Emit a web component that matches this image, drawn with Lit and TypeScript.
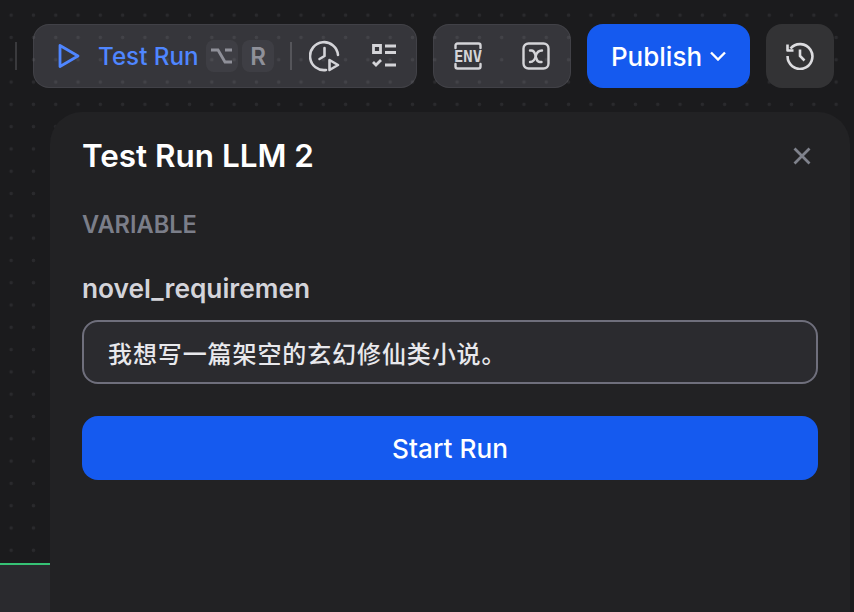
import { LitElement, html, css } from "lit";
import { customElement } from "lit/decorators.js";

@customElement("app-root")
export class AppRoot extends LitElement {
  static styles = css`
    :host { display: block; }
    * { box-sizing: border-box; }
    .canvas {
      position: relative; width: 854px; height: 612px; overflow: hidden;
      display: flex; flex-direction: column;
      background-color: #1b1b1d;
      background-image: radial-gradient(circle at center, #2a2a2d 0, #2a2a2d 1.5px, transparent 2.1px);
      background-size: 22.3px 22.3px;
      background-position: 0 4px;
      font-family: Inter, "Noto Sans CJK SC", sans-serif;
    }
    .node {
      position: absolute; left: 0; top: 563px; width: 60px; height: 49px;
      background: #2a2a2e; border-top: 2px solid #36c275;
    }
    .toolbar { display: flex; align-items: center; height: 64px; margin-top: 24px; padding-left: 15px; position: relative; }
    .sep { width: 2px; height: 28px; background: #3a3a3d; }
    .group {
      display: flex; align-items: center; height: 64px; border-radius: 16px;
      background: rgba(200,200,215,.16); border: 1px solid rgba(200,200,215,.08);
    }
    .run { margin-left: 16px; width: 384px; padding-left: 24px; }
    .run-label { margin-left: 18px; font-size: 24.2px; font-weight: 500; color: #4f86ff; white-space: nowrap; width: 100px; }
    .key {
      width: 32px; height: 32px; border-radius: 8px; background: rgba(200,200,215,.06);
      display: flex; align-items: center; justify-content: center;
      color: #8f9099; font-size: 24px; font-weight: 600;
    }
    .key.opt { margin-left: 8px; }
    .key.r { margin-left: 4px; }
    .vsep { width: 2px; height: 28px; background: #55555a; margin: 0 16px; }
    .icon { display: block; flex: none; }
    .clock { margin-left: 1px; }
    .list { margin-left: 32px; }
    .vars { margin-left: 16px; width: 138px; padding-left: 20px; }
    .xvar { margin-left: 40px; }
    .publish {
      margin-left: 16px; width: 163px; height: 64px; border-radius: 16px; background: #155aef;
      color: #fff; display: flex; align-items: center; justify-content: center; gap: 8px;
      font-size: 26px; font-weight: 500;
    }
    .history {
      margin-left: 16px; width: 68px; height: 64px; border-radius: 16px; background: #333335;
      display: flex; align-items: center; justify-content: center;
    }
    .panel {
      position: relative; flex: 1; margin: 24px 4px 0 50px; padding: 23px 32px 0;
      background: #222224; border-radius: 32px 32px 0 0;
    }
    .head { display: flex; align-items: center; justify-content: space-between; height: 42px; }
    .title { font-size: 31.4px; font-weight: 600; color: #fff; }
    .close { margin-right: 7px; }
    .section { margin-top: 34px; font-size: 23.6px; font-weight: 600; color: #7b7e89; line-height: 28px; }
    .name { margin-top: 34px; font-size: 26.3px; font-weight: 600; color: #d4d4da; line-height: 32px; }
    .input {
      margin-top: 15px; height: 64px; border-radius: 16px; border: 2px solid #6f6f7c; background: #2b2b2f;
      display: flex; align-items: center; padding-left: 24px;
      color: #e8e8ec; font-size: 24px; font-weight: 500; font-family: "Noto Sans CJK SC", sans-serif; letter-spacing: .9px;
    }
    .start {
      margin-top: 32px; height: 64px; border-radius: 16px; background: #155aef; color: #fff;
      display: flex; align-items: center; justify-content: center; font-size: 26.2px; font-weight: 500;
    }
  `;

  render() {
    return html`
      <div class="canvas">
        <div class="node"></div>
        <div class="toolbar">
          <div class="sep"></div>
          <div class="group run">
            <svg class="icon" width="22" height="26" viewBox="0 0 22 26" fill="none" stroke="#4f86ff" stroke-width="2.8" stroke-linejoin="round"><path d="M2 2.5 L20 13 L2 23.5 Z"/></svg>
            <div class="run-label">Test Run</div>
            <div class="key opt">
              <svg width="22" height="18" viewBox="0 0 22 18" fill="none" stroke="#8f9099" stroke-width="2.8"><path d="M0 3H7L14 15H21M14 3H21"/></svg>
            </div>
            <div class="key r">R</div>
            <div class="vsep"></div>
            <svg class="icon clock" width="31" height="32" viewBox="0 0 31 32" fill="none" stroke="#d4d4d8" stroke-width="2.6" stroke-linecap="round" stroke-linejoin="round">
              <path d="M17 30 A14 14 0 1 1 29 15"/>
              <path d="M15.5 8V16L10.5 19"/>
              <path d="M20.5 20 L29 25 L20.5 30 Z"/>
            </svg>
            <svg class="icon list" width="24" height="24" viewBox="0 0 24 24" fill="none" stroke="#d4d4d8" stroke-width="2.8">
              <path d="M1.5 1.5H8.5V8.5H1.5Z"/>
              <path d="M13 2H24M13 8.5H24M13 21H24"/>
              <path d="M1 18L4 21L9 16"/>
            </svg>
          </div>
          <div class="group vars">
            <svg class="icon" width="28" height="28" viewBox="0 0 28 28" fill="none" stroke="#d4d4d8" stroke-width="2.4" stroke-linecap="round">
              <path d="M1.5 6V3.5A2 2 0 0 1 3.5 1.5H24.5A2 2 0 0 1 26.5 3.5V6"/>
              <path d="M1.5 22V24.5A2 2 0 0 0 3.5 26.5H24.5A2 2 0 0 0 26.5 24.5V22"/>
              <text x="14" y="19.6" text-anchor="middle" font-family="'DejaVu Sans Mono', monospace" font-size="15.5" font-weight="700" fill="#d4d4d8" stroke="none" textLength="28" lengthAdjust="spacingAndGlyphs">ENV</text>
            </svg>
            <svg class="icon xvar" width="28" height="28" viewBox="0 0 28 28" fill="none" stroke="#d4d4d8" stroke-width="2.4" stroke-linecap="round">
              <rect x="1.5" y="1.5" width="25" height="25" rx="5"/>
              <path d="M8 8.5H9.5C11.5 8.5 12.5 10 13.2 12.5L14.5 17C15.2 19 16 20 18 20H19.5"/>
              <path d="M20 8.5C16.5 8.5 14.5 11 13.8 14C13.2 17 11 20 8 20"/>
            </svg>
          </div>
          <div class="publish">
            <span>Publish</span>
            <svg class="icon" width="16" height="10" viewBox="0 0 16 10" fill="none" stroke="#fff" stroke-width="2.4"><path d="M1 1.5L8 8.5L15 1.5"/></svg>
          </div>
          <div class="history">
            <svg class="icon" width="28" height="28" viewBox="0 0 28 28" fill="none" stroke="#dcdcdf" stroke-width="2.6">
              <path d="M4.5 6.5A12.4 12.4 0 1 1 1.6 14"/>
              <path d="M1.5 2.5V8.5H7.5" stroke-linejoin="round"/>
              <path d="M14 7.5V14L18.5 18.5"/>
            </svg>
          </div>
        </div>
        <div class="panel">
          <div class="head">
            <div class="title">Test Run LLM 2</div>
            <svg class="icon close" width="18" height="18" viewBox="0 0 18 18" fill="none" stroke="#7f828c" stroke-width="2.8"><path d="M1.5 1.5L16.5 16.5M16.5 1.5L1.5 16.5"/></svg>
          </div>
          <div class="section">VARIABLE</div>
          <div class="name">novel_requiremen</div>
          <div class="input">我想写一篇架空的玄幻修仙类小说。</div>
          <div class="start">Start Run</div>
        </div>
      </div>
    `;
  }
}
